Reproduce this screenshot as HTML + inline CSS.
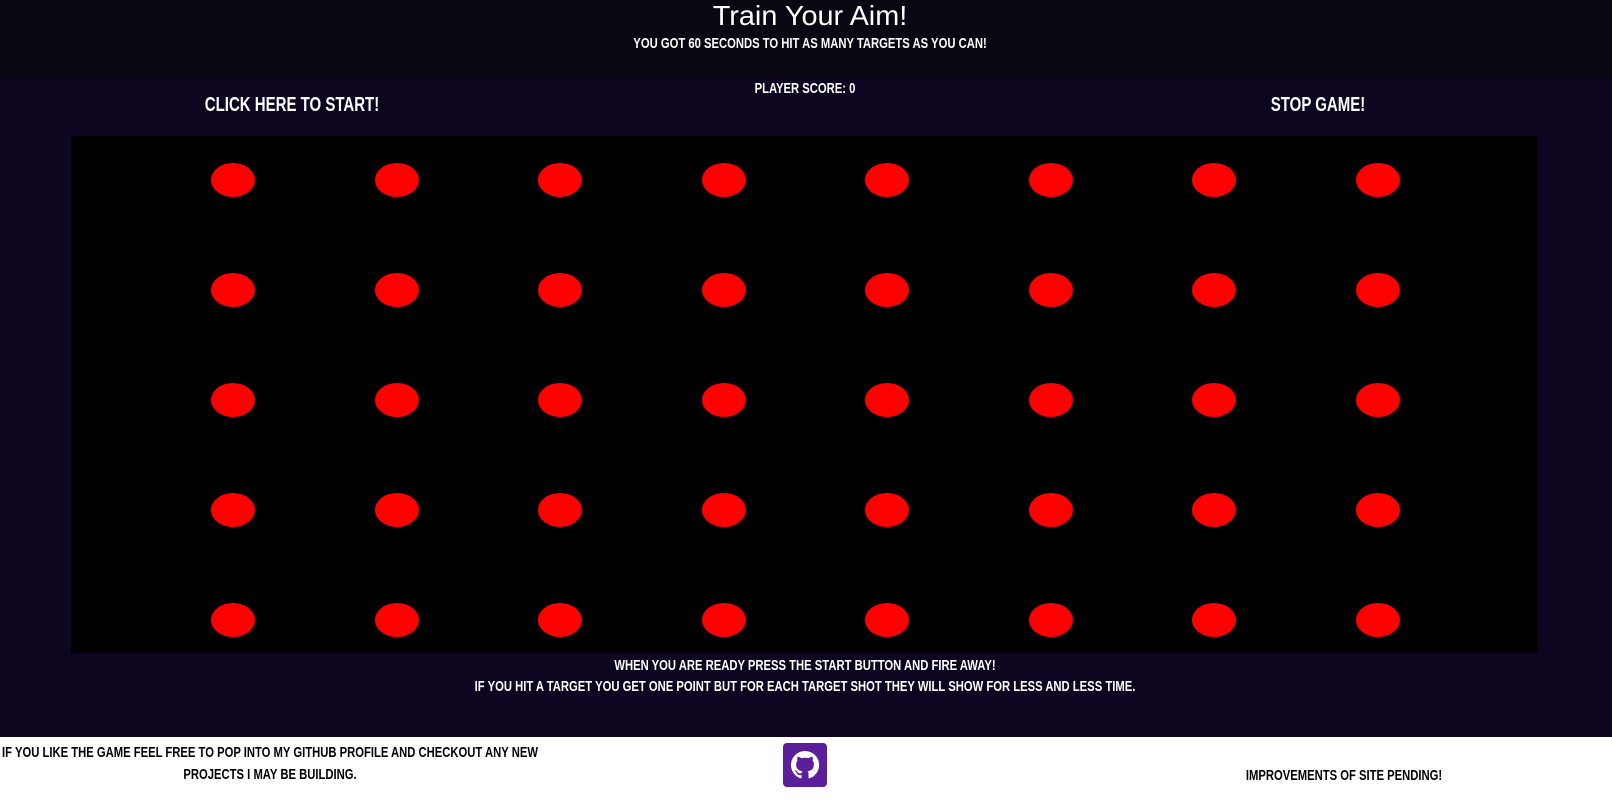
<!DOCTYPE html>
<html><head><meta charset="utf-8"><style>
*{margin:0;padding:0;box-sizing:border-box}
body{width:1612px;height:809px;overflow:hidden;background:#fff;font-family:"Liberation Sans",sans-serif;position:relative}
.t{position:absolute;color:#fff;font-weight:bold;text-transform:uppercase;white-space:nowrap;transform:translateX(-50%) scaleX(0.75);text-align:center}
#hdr{position:absolute;left:0;top:0;width:1612px;height:78px;background:#0a0612}
#main{position:absolute;left:0;top:78px;width:1612px;height:659px;background:#0e0520}
#game{position:absolute;left:71px;top:136px;width:1467px;height:517px;background:#000}
.d{position:absolute;width:44px;height:34px;border-radius:50%;background:#ff0000}
.k{color:#000}
</style></head><body>
<div id="hdr"></div><div id="main"></div><div id="game"></div>
<div class="t" style="left:810px;top:0px;font-weight:normal;text-transform:none;font-size:28px;transform:translateX(-50%) scaleX(1.03)">Train Your Aim!</div>
<div class="t" style="left:810px;top:35px;font-size:15px">You got 60 seconds to hit as many targets as you can!</div>
<div class="t" style="left:805px;top:80px;font-size:15px">Player Score: 0</div>
<div class="t" style="left:292px;top:94px;font-size:20px">Click here to start!</div>
<div class="t" style="left:1318px;top:94px;font-size:20px">Stop Game!</div>
<div class="t" style="left:805px;top:657px;font-size:15px">When you are ready press the start button and fire away!</div>
<div class="t" style="left:805px;top:678px;font-size:15px">If you hit a target you get one point but for each target shot they will show for less and less time.</div>
<div class="t k" style="left:270px;top:744px;font-size:15px">If you like the game feel free to pop into my github profile and checkout any new</div>
<div class="t k" style="left:270px;top:766px;font-size:15px">projects I may be building.</div>
<div class="t k" style="left:1344px;top:767px;font-size:15px">Improvements of site pending!</div>
<svg style="position:absolute;left:783px;top:743px" width="44" height="44" viewBox="0 0 44 44"><rect width="44" height="44" rx="4" fill="#5b1f9c"/><path d="M22 8a14 14 0 0 0-4.4 27.3c.7.1 1-.3 1-.7v-2.5c-3.9.8-4.7-1.7-4.7-1.7-.6-1.6-1.6-2-1.6-2-1.3-.9.1-.9.1-.9 1.4.1 2.1 1.4 2.1 1.4 1.3 2.2 3.3 1.5 4.1 1.2.1-.9.5-1.5.9-1.9-3.1-.4-6.4-1.6-6.4-6.9 0-1.5.5-2.8 1.4-3.8-.1-.4-.6-1.8.1-3.7 0 0 1.2-.4 3.9 1.4a13 13 0 0 1 7 0c2.7-1.8 3.9-1.4 3.9-1.4.8 1.9.3 3.3.1 3.7.9 1 1.4 2.2 1.4 3.8 0 5.4-3.3 6.5-6.4 6.9.5.4 1 1.3 1 2.6v3.8c0 .4.3.8 1 .7A14 14 0 0 0 22 8z" fill="#fff"/></svg>
<div id="dots"></div>
<script>
var xs=[233,397,560,724,887,1051,1214,1378],ys=[180,290,400,510,620],h='';
ys.forEach(function(y){xs.forEach(function(x){h+='<div class="d" style="left:'+(x-22)+'px;top:'+(y-17)+'px"></div>';});});
document.getElementById('dots').innerHTML=h;
</script>
</body></html>
